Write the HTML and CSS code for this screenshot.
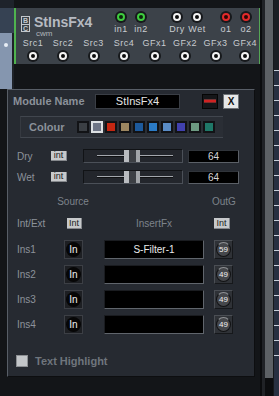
FILE: index.html
```html
<!DOCTYPE html>
<html lang="en">
<head>
<meta charset="UTF-8">
<title>StInsFx4</title>
<link rel="stylesheet" href="styles.css">
</head>
<body>
<div class="page">
<div class="main">
    <div class="rack">
        <div class="side">
            <div class="side-top"></div>
            <div class="side-mid"></div>
            <div class="side-glow"><span class="side-dot"></span></div>
        </div>
        <div class="module">
            <div class="mod-top">
                <div class="logo"><span>B</span><span>C</span></div>
                <div class="mod-title">
                    <div class="mod-name">StInsFx4</div>
                    <div class="mod-maker">cwm</div>
                </div>
                <div class="pair">
                    <div class="tj"><span class="jack green"></span><span class="jl">in1</span></div>
                    <div class="tj"><span class="jack green"></span><span class="jl">in2</span></div>
                </div>
                <div class="pair gap-a">
                    <div class="tj"><span class="jack"></span><span class="jl">Dry</span></div>
                    <div class="tj"><span class="jack"></span><span class="jl">Wet</span></div>
                </div>
                <div class="pair gap-b">
                    <div class="tj"><span class="jack red"></span><span class="jl">o1</span></div>
                    <div class="tj"><span class="jack red"></span><span class="jl">o2</span></div>
                </div>
            </div>
            <div class="mod-bottom">
                <div class="bj"><span class="jl">Src1</span><span class="jack"></span></div>
                <div class="bj"><span class="jl">Src2</span><span class="jack"></span></div>
                <div class="bj"><span class="jl">Src3</span><span class="jack"></span></div>
                <div class="bj"><span class="jl">Src4</span><span class="jack"></span></div>
                <div class="bj"><span class="jl">GFx1</span><span class="jack"></span></div>
                <div class="bj"><span class="jl">GFx2</span><span class="jack"></span></div>
                <div class="bj"><span class="jl">GFx3</span><span class="jack"></span></div>
                <div class="bj"><span class="jl">GFx4</span><span class="jack"></span></div>
            </div>
        </div>
    </div>

    <div class="dialog">
        <div class="dlg-head">
            <div class="dlg-title">Module Name</div>
            <div class="name-box">StInsFx4</div>
            <div class="btn-min"><span></span></div>
            <div class="btn-close">X</div>
        </div>

        <div class="colour-panel">
            <div class="colour-label">Colour</div>
            <div class="swatches">
                <span class="swatch" style="background:#3b3f44"></span>
                <span class="swatch sel" style="background:#6e7586"></span>
                <span class="swatch" style="background:#c42712"></span>
                <span class="swatch" style="background:#9c8660"></span>
                <span class="swatch" style="background:#1d5a9c"></span>
                <span class="swatch" style="background:#2b7bc6"></span>
                <span class="swatch" style="background:#5a8cc6"></span>
                <span class="swatch" style="background:#4141ae"></span>
                <span class="swatch" style="background:#6d9a82"></span>
                <span class="swatch" style="background:#1f7868"></span>
            </div>
        </div>

        <div class="ctl-row first">
            <div class="row-label">Dry</div>
            <div class="int-btn">int</div>
            <div class="slider"><span class="seg"></span><span class="thumb"></span><span class="seg right"></span></div>
            <div class="value">64</div>
        </div>
        <div class="ctl-row">
            <div class="row-label">Wet</div>
            <div class="int-btn">int</div>
            <div class="slider"><span class="seg"></span><span class="thumb"></span><span class="seg right"></span></div>
            <div class="value">64</div>
        </div>

        <div class="section-row">
            <div class="src-label">Source</div>
            <div class="outg-label">OutG</div>
        </div>

        <div class="ie-row">
            <div class="ie-label">Int/Ext</div>
            <div class="int-btn cap">Int</div>
            <div class="insert-label">InsertFx</div>
            <div class="int-btn cap out">Int</div>
        </div>

        <div class="ins-row">
            <div class="ins-label">Ins1</div>
            <div class="in-btn"><span>In</span></div>
            <div class="ins-box">S-Filter-1</div>
            <div class="knob"><span>59</span></div>
        </div>
        <div class="ins-row">
            <div class="ins-label">Ins2</div>
            <div class="in-btn"><span>In</span></div>
            <div class="ins-box"></div>
            <div class="knob"><span>49</span></div>
        </div>
        <div class="ins-row">
            <div class="ins-label">Ins3</div>
            <div class="in-btn"><span>In</span></div>
            <div class="ins-box"></div>
            <div class="knob"><span>49</span></div>
        </div>
        <div class="ins-row">
            <div class="ins-label">Ins4</div>
            <div class="in-btn"><span>In</span></div>
            <div class="ins-box"></div>
            <div class="knob"><span>49</span></div>
        </div>

        <div class="hl-row">
            <span class="check"></span>
            <span class="hl-label">Text Highlight</span>
        </div>
    </div>
</div>
<div class="right">
    <div class="gutter"><div class="gutter-edge"></div></div>
    <div class="scroll"><div class="scroll-bar"></div></div>
    <div class="sep"></div>
    <div class="ruler">
        <div class="ruler-top"></div>
        <div class="tick"></div><div class="tick"></div><div class="tick"></div>
        <div class="tick"></div><div class="tick"></div><div class="tick"></div>
        <div class="tick"></div><div class="tick"></div><div class="tick"></div>
        <div class="tick"></div><div class="tick"></div><div class="tick"></div>
        <div class="tick"></div><div class="tick"></div><div class="tick"></div>
        <div class="tick"></div><div class="tick"></div><div class="tick"></div>
        <div class="tick"></div><div class="tick"></div>
    </div>
</div>
</div>
</body>
</html>
```

FILE: styles.css
```css
html, body {
    margin: 0;
    background: #131518;
}
body {
    font-family: "Liberation Sans", Arial, sans-serif;
}
.page {
    display: flex;
    width: 279px;
    height: 396px;
}
.main {
    width: 260px;
}

/* rack strip at the top */
.rack {
    display: flex;
    height: 89px;
}
.side {
    width: 14px;
    background: #1e2228;
}
.side-top {
    height: 8px;
    background: #1e232b;
}
.side-mid {
    height: 25px;
    background: #364253;
}
.side-glow {
    width: 12px;
    height: 56px;
    padding-top: 10px;
    box-sizing: border-box;
    background: #8596af;
    display: flex;
    justify-content: center;
}
.side-dot {
    width: 4px;
    height: 4px;
    border-radius: 50%;
    background: #e8eef6;
}
.module {
    width: 246px;
    height: 56px;
    margin-top: 8px;
    box-sizing: border-box;
    background: #3c4249;
    border-left: 2px solid #4fb34f;
    border-right: 1px solid #55a655;
    color: #c8ccd0;
}
.mod-top {
    display: flex;
    height: 30px;
}
.logo {
    width: 9px;
    height: 16px;
    margin: 8px 0 0 5px;
    box-sizing: border-box;
    border: 1px solid #c3c7cc;
    display: flex;
    flex-direction: column;
    font-size: 7px;
    line-height: 7px;
    font-weight: bold;
    text-align: center;
    color: #c3c7cc;
}
.logo span:first-child {
    border-bottom: 1px solid #c3c7cc;
}
.mod-title {
    width: 77px;
    margin-left: 4px;
}
.mod-name {
    margin-top: 6px;
    font-size: 14px;
    line-height: 16px;
    font-weight: bold;
    color: #b6bac1;
}
.mod-maker {
    margin-left: 2px;
    font-size: 8px;
    line-height: 7px;
    color: #b0b4ba;
}
.pair {
    display: flex;
}
.gap-a { margin-left: 16px; }
.gap-b { margin-left: 9px; }
.tj {
    width: 20px;
    display: flex;
    flex-direction: column;
    align-items: center;
}
.tj .jack {
    margin-top: 3px;
}
.jl {
    font-size: 9px;
    line-height: 10px;
    letter-spacing: 0.5px;
    white-space: nowrap;
}
.tj .jl {
    margin-top: 1px;
}
.mod-bottom {
    display: grid;
    grid-template-columns: 30px 30px 31px 30px 31px 30px 31px 28px;
    padding-left: 2px;
}
.bj {
    display: flex;
    flex-direction: column;
    align-items: center;
}
.bj .jack {
    margin-top: 2px;
}
.jack {
    width: 12px;
    height: 12px;
    border-radius: 50%;
    background: #17191c;
    display: flex;
    justify-content: center;
    align-items: center;
}
.jack::after {
    content: "";
    width: 4px;
    height: 4px;
    border-radius: 50%;
    border: 2px solid #f3f3f3;
    background: #0c0c0c;
}
.jack.green::after {
    border-color: #3fcb3f;
    background: #0c260c;
}
.jack.red::after {
    border-color: #e22a2a;
    background: #2c0606;
}

/* module settings dialog */
.dialog {
    width: 248px;
    height: 288px;
    margin-left: 7px;
    box-sizing: border-box;
    border: 1px solid;
    border-color: #585e67 #0d0e10 #0d0e10 #585e67;
    background: #262a31;
}
.dlg-head {
    display: flex;
    align-items: center;
    height: 16px;
    margin-top: 3px;
    padding-left: 5px;
}
.dlg-title {
    width: 82px;
    font-size: 11px;
    font-weight: bold;
    color: #8b919a;
}
.name-box {
    width: 85px;
    height: 15px;
    box-sizing: border-box;
    background: #000;
    border: 1px solid #3a3e45;
    color: #e4e4e4;
    font-size: 11px;
    line-height: 13px;
    text-align: center;
}
.btn-min {
    width: 16px;
    height: 15px;
    margin-left: 22px;
    box-sizing: border-box;
    background: #151619;
    border: 1px solid #050505;
    display: flex;
    justify-content: center;
    align-items: center;
}
.btn-min span {
    width: 12px;
    height: 4px;
    box-sizing: border-box;
    background: #d02222;
    border-top: 1px solid #6e3434;
    border-bottom: 1px solid #7e2a2a;
}
.btn-close {
    width: 16px;
    height: 15px;
    margin-left: 5px;
    box-sizing: border-box;
    background: #e6e7e8;
    border: 1px solid #6e7276;
    color: #111;
    font-size: 10px;
    font-weight: bold;
    line-height: 13px;
    text-align: center;
}
.colour-panel {
    display: flex;
    align-items: center;
    width: 203px;
    height: 22px;
    margin: 7px 0 0 12px;
    padding-left: 8px;
    box-sizing: border-box;
    background: #2a2e35;
    border-top: 1px solid #41464e;
    border-left: 1px solid #363a41;
    border-bottom: 1px solid #41464e;
}
.colour-label {
    width: 48px;
    font-size: 11px;
    font-weight: bold;
    color: #8b919a;
}
.swatches {
    display: flex;
    gap: 2px;
}
.swatch {
    width: 12px;
    height: 12px;
    box-sizing: border-box;
    border: 2px solid #121316;
}
.swatch.sel {
    border-color: #dde0e3;
}

.ctl-row {
    display: flex;
    align-items: center;
    height: 14px;
    margin-top: 7px;
    padding-left: 9px;
}
.ctl-row.first {
    margin-top: 11px;
}
.row-label {
    width: 34px;
    font-size: 10px;
    color: #8c929a;
}
.int-btn {
    width: 16px;
    height: 10px;
    box-sizing: border-box;
    background: #c7c9cb;
    border-right: 1px solid #85888c;
    border-bottom: 1px solid #85888c;
    color: #1c1e21;
    font-size: 9px;
    line-height: 9px;
    text-align: center;
}
.slider {
    display: flex;
    align-items: center;
    width: 100px;
    height: 14px;
    margin-left: 16px;
    padding-left: 13px;
    box-sizing: border-box;
    border: 1px solid;
    border-color: #111316 #4b5058 #4b5058 #111316;
    background: #23262c;
}
.seg {
    width: 27px;
    height: 2px;
    box-sizing: border-box;
    background: #0f1012;
    border-top: 1px solid #a3a7ad;
}
.seg.right {
    width: 33px;
}
.thumb {
    width: 16px;
    height: 12px;
    box-sizing: border-box;
    background: #3c3f44;
    border-left: 5px solid #b9bcc0;
    border-right: 4px solid #a2a5a9;
}
.value {
    width: 51px;
    height: 13px;
    margin-left: 5px;
    box-sizing: border-box;
    background: #000;
    border: 1px solid;
    border-color: #30343a #5b6067 #5b6067 #30343a;
    color: #d6d6d6;
    font-size: 10px;
    line-height: 11px;
    text-align: center;
}
.section-row {
    display: flex;
    height: 10px;
    margin-top: 13px;
    padding-left: 9px;
    font-size: 10px;
    line-height: 10px;
    color: #7d838b;
}
.src-label {
    width: 112px;
    text-align: center;
}
.outg-label {
    margin-left: 83px;
}
.ie-row {
    display: flex;
    align-items: center;
    height: 11px;
    margin-top: 11px;
    padding-left: 9px;
}
.ie-label {
    width: 50px;
    font-size: 10px;
    color: #8c929a;
}
.int-btn.cap {
    width: 15px;
    height: 11px;
    line-height: 10px;
}
.int-btn.out {
    width: 16px;
    margin-left: 10px;
}
.insert-label {
    width: 100px;
    margin-left: 22px;
    font-size: 10px;
    color: #7d838b;
    text-align: center;
}
.ins-row {
    display: flex;
    align-items: center;
    height: 19px;
    margin-top: 11px;
    padding-left: 9px;
}
.ins-row + .ins-row {
    margin-top: 6px;
}
.ins-label {
    width: 47px;
    font-size: 10px;
    color: #8c929a;
}
.in-btn {
    width: 19px;
    height: 19px;
    box-sizing: border-box;
    background: #1d1f23;
    border: 1px solid #3c3f45;
    display: flex;
    justify-content: center;
    align-items: center;
}
.in-btn span {
    width: 15px;
    height: 15px;
    border-radius: 50%;
    background: #060606;
    color: #f0f0f0;
    font-size: 10px;
    line-height: 15px;
    text-align: center;
}
.ins-box {
    width: 100px;
    height: 19px;
    margin-left: 21px;
    box-sizing: border-box;
    background: #000;
    border: 1px solid;
    border-color: #1a1c20 #60656c #60656c #1a1c20;
    color: #eaeaea;
    font-size: 10px;
    line-height: 17px;
    text-align: center;
}
.knob {
    width: 19px;
    height: 19px;
    margin-left: 10px;
    box-sizing: border-box;
    background: #2f3237;
    border: 1px solid;
    border-color: #4a4e54 #16181b #16181b #4a4e54;
    display: flex;
    justify-content: center;
    align-items: center;
}
.knob span {
    width: 15px;
    height: 15px;
    box-sizing: border-box;
    border-radius: 50%;
    border: 1px solid #101113;
    border-top-color: #8e9195;
    background: #45474b;
    color: #f2f2f2;
    font-size: 8px;
    line-height: 13px;
    text-align: center;
}
.hl-row {
    display: flex;
    align-items: center;
    height: 12px;
    margin-top: 21px;
    padding-left: 8px;
}
.check {
    width: 12px;
    height: 12px;
    box-sizing: border-box;
    background: #c3c6c9;
    border: 1px solid #8c8f93;
}
.hl-label {
    margin-left: 7px;
    font-size: 11px;
    font-weight: bold;
    color: #6f757d;
}

/* right hand scroll strip */
.right {
    display: flex;
    width: 19px;
}
.gutter {
    width: 5px;
    background: #0b0c0e;
    display: flex;
    justify-content: flex-end;
}
.gutter-edge {
    width: 3px;
    background: #202226;
}
.scroll {
    width: 8px;
    background: #0c0d0f;
}
.scroll-bar {
    height: 378px;
    background: #5d6165;
}
.sep {
    width: 1px;
    background: #16181b;
}
.ruler {
    width: 5px;
    overflow: hidden;
    background: #283041;
}
.ruler-top {
    height: 70px;
    background: #1b1e23;
}
.tick {
    height: 1px;
    margin-bottom: 14px;
    background: #c9d0da;
}
```
